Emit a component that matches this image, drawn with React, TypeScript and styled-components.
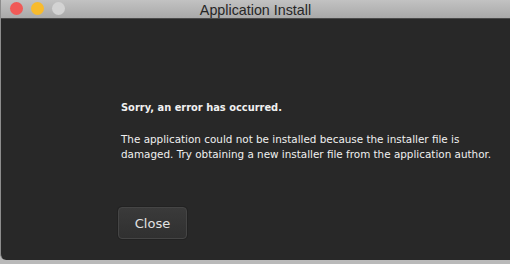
import styled, { createGlobalStyle } from "styled-components";

const Global = createGlobalStyle`
  html, body {
    margin: 0;
    padding: 0;
    background: #b9b9b9;
  }
  body {
    width: 510px;
    height: 264px;
    overflow: hidden;
  }
`;

const Window = styled.div`
  width: 510px;
  height: 260px;
  display: flex;
  flex-direction: column;
  background: #282828;
  border-left: 1px solid #8d8d8d;
  border-bottom-left-radius: 6px;
  box-sizing: border-box;
  overflow: hidden;
`;

const TitleBar = styled.div`
  height: 18px;
  flex: none;
  position: relative;
  display: flex;
  align-items: center;
  justify-content: center;
  background: linear-gradient(#c2c2c2, #a9a9a9);
  border-bottom: 1px solid #4a4a4a;
`;

const Lights = styled.div`
  position: absolute;
  left: 9px;
  top: 2px;
  display: flex;
  gap: 8px;
`;

const Light = styled.span<{ $color: string }>`
  width: 13px;
  height: 13px;
  border-radius: 50%;
  background: ${(p) => p.$color};
`;

const Title = styled.div`
  font-family: "Liberation Sans", Arial, sans-serif;
  font-size: 14.3px;
  color: #262626;
  margin-top: 1px;
`;

const Body = styled.div`
  flex: 1;
  padding: 82px 0 0 117px;
  font-family: "DejaVu Sans", Verdana, sans-serif;
  color: #f0f0f0;
`;

const Text = styled.div`
  padding-left: 3px;
`;

const Heading = styled.div`
  font-size: 9.9px;
  font-weight: bold;
  line-height: 14px;
  margin-bottom: 17px;
`;

const Message = styled.div`
  font-size: 10.4px;
  line-height: 15px;
`;

const Button = styled.button`
  margin-top: 45px;
  width: 69px;
  height: 32px;
  border-radius: 4px;
  border: 1px solid #454545;
  background: linear-gradient(#3a3a3a, #303030);
  color: #e2e2e2;
  font-family: "DejaVu Sans", Verdana, sans-serif;
  font-size: 13px;
  padding: 0;
  box-shadow: 0 0 0 1px #222;
`;

export default function App() {
  return (
    <>
      <Global />
      <Window>
        <TitleBar>
          <Lights>
            <Light $color="#f05a57" />
            <Light $color="#f8bb2d" />
            <Light $color="#d3d3d3" />
          </Lights>
          <Title>Application Install</Title>
        </TitleBar>
        <Body>
          <Text>
            <Heading>Sorry, an error has occurred.</Heading>
            <Message>
              The application could not be installed because the installer file is
              <br />
              damaged. Try obtaining a new installer file from the application author.
            </Message>
          </Text>
          <Button>Close</Button>
        </Body>
      </Window>
    </>
  );
}
